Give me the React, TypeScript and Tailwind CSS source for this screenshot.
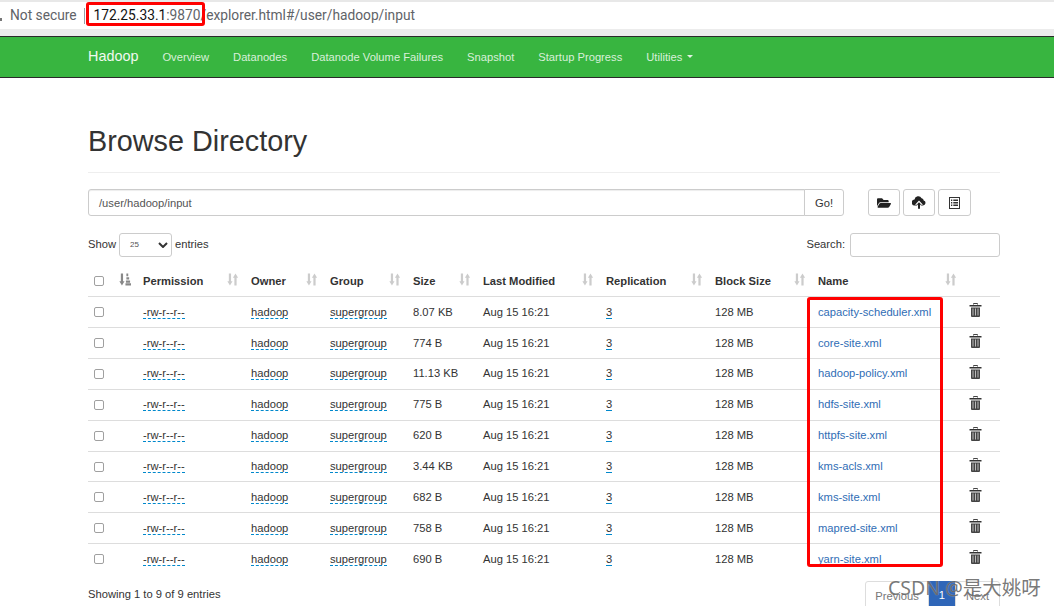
import { FaFolderOpen } from 'react-icons/fa'

const files = [
  { size: '8.07 KB', name: 'capacity-scheduler.xml' },
  { size: '774 B', name: 'core-site.xml' },
  { size: '11.13 KB', name: 'hadoop-policy.xml' },
  { size: '775 B', name: 'hdfs-site.xml' },
  { size: '620 B', name: 'httpfs-site.xml' },
  { size: '3.44 KB', name: 'kms-acls.xml' },
  { size: '682 B', name: 'kms-site.xml' },
  { size: '758 B', name: 'mapred-site.xml' },
  { size: '690 B', name: 'yarn-site.xml' },
]

const columns = [
  { label: 'Permission', width: 'w-[108px]' },
  { label: 'Owner', width: 'w-[79px]' },
  { label: 'Group', width: 'w-[83px]' },
  { label: 'Size', width: 'w-[70px]' },
  { label: 'Last Modified', width: 'w-[123px]' },
  { label: 'Replication', width: 'w-[109px]' },
  { label: 'Block Size', width: 'w-[103px]' },
  { label: 'Name', width: 'w-[151px]' },
]

function SortIcon({ active = false }: { active?: boolean }) {
  const color = active ? '#888' : '#ccc'
  return (
    <svg width="12" height="13" viewBox="0 0 13 13" fill={color}>
      <path d="M2 0h2.400v8.500H6L3.200 13 .4 8.500H2z" />
      {active ? (
        <path d="M8 0h2v3H8zM8 4h3v2.500H8zM7.500 7.500h4.500V10H7.500zM7 10.500h6V13H7z" />
      ) : (
        <path d="M8 13h2.400V4.500H12L9.200 0 6.400 4.500H8z" />
      )}
    </svg>
  )
}

function TrashIcon() {
  return (
    <svg width="13" height="14" viewBox="0 0 13 14">
      <path d="M4.500 1.500V.5h4v1" fill="none" stroke="#444" />
      <path d="M.5 2h12v1.500H.5z" fill="#333" />
      <path d="M2 4.500h9V13a1 1 0 0 1-1 1H3a1 1 0 0 1-1-1z" fill="#444" />
      <path d="M3.500 5.500h1v7h-1zM6 5.500h1v7H6zM8.500 5.500h1v7h-1z" fill="#bbb" />
    </svg>
  )
}

function CloudUpload() {
  return (
    <svg width="14" height="13" viewBox="0 0 14 13">
      <path d="M3 9.500a3 3 0 0 1-.5-6A3.800 3.800 0 0 1 9.600 2.300 2.500 2.500 0 0 1 11.700 4.600 2.500 2.500 0 0 1 11 9.500z" fill="#222" />
      <path d="M7 4.500l4 4.200H8.800V13H5.200V8.700H3z" fill="#fff" />
      <path d="M7 6.200l2.400 2.600H8v4H6v-4H4.600z" fill="#222" />
    </svg>
  )
}

function ListAlt() {
  return (
    <svg width="11" height="12" viewBox="0 0 11 12" fill="#333">
      <path d="M0 0h11v12H0zm1 1v10h9V1zm1 1.500h1.300V4H2zm2.300 0H9V4H4.300zM2 5h1.300v1.500H2zm2.300 0H9v1.500H4.300zM2 7.500h1.300V9H2zm2.300 0H9V9H4.300z" fillRule="evenodd" />
    </svg>
  )
}

function Checkbox() {
  return <span className="block h-[10px] w-[10px] rounded-[2px] border border-[#a0a0a0] bg-white" />
}

function Dotted({ children }: { children: string }) {
  return <span className="border-b border-dashed border-[#08c]">{children}</span>
}

export default function App() {
  return (
    <div className="relative h-[606px] w-[1054px] overflow-hidden bg-white font-['Liberation_Sans',sans-serif] text-[11.2px] text-[#333]">
      {/* browser address bar */}
      <div className="h-[36px] border-t-2 border-b-[7px] border-[#e8e8e8] border-b-[#ececec] bg-white">
        <div className="flex h-[27px] items-center pl-[10px] font-['Roboto',sans-serif] text-[13.75px] text-[#5f6368]">
          <span>Not secure</span>
          <span className="ml-[7px] mr-[9px] h-[16px] w-px bg-[#9aa0a6]" />
          <span className="text-[#111]">172.25.33.1</span>
          <span>:9870/explorer.html#/user/hadoop/input</span>
        </div>
      </div>

      {/* navbar */}
      <nav className="flex h-[42px] items-center border-y border-[#2a2a2a] bg-[#38b540] pl-[88px] text-[#d9f0da]">
        <span className="mr-[24px] text-[14.4px] text-[#f0f9f0]">Hadoop</span>
        <div className="flex gap-[24px]">
          <span>Overview</span>
          <span>Datanodes</span>
          <span>Datanode Volume Failures</span>
          <span>Snapshot</span>
          <span>Startup Progress</span>
          <span className="flex items-center gap-[5px]">
            Utilities
            <span className="h-0 w-0 border-x-[3px] border-t-[3px] border-x-transparent border-t-[#e2f3e3]" />
          </span>
        </div>
      </nav>

      <main className="ml-[88px] w-[912px]">
        <div className="mt-[44px] border-b border-[#eee] pb-[12px]">
          <h1 className="text-[28.8px] leading-[38px] text-[#333]">Browse Directory</h1>
        </div>

        {/* path and actions */}
        <div className="mt-[16px] flex items-center">
          <div className="flex h-[27px] w-[717px] items-center rounded-l-[3px] border border-[#ccc] pl-[10px] pt-px text-[#555] shadow-[inset_0_1px_1px_rgba(0,0,0,0.075)]">
            /user/hadoop/input
          </div>
          <button className="-ml-px h-[27px] w-[40px] rounded-r-[3px] border border-[#ccc] bg-white pt-px">Go!</button>
          <div className="ml-[24px] flex gap-[3px]">
            <button className="flex h-[27px] w-[32px] items-center justify-center rounded-[3px] border border-[#ccc]">
              <FaFolderOpen size={14} color="#222" />
            </button>
            <button className="flex h-[27px] w-[32px] items-center justify-center rounded-[3px] border border-[#ccc]">
              <CloudUpload />
            </button>
            <button className="flex h-[27px] w-[33px] items-center justify-center rounded-[3px] border border-[#ccc]">
              <ListAlt />
            </button>
          </div>
        </div>

        {/* length and search */}
        <div className="mt-[17px] flex h-[24px] items-center justify-between">
          <div className="flex items-center gap-[3px]">
            <span className="-mt-[2px]">Show</span>
            <div className="flex h-[24px] w-[53px] items-center justify-between rounded-[3px] border border-[#ccc] pl-[10px] pr-[3px] text-[8px] text-[#555]">
              25
              <svg width="10" height="6" viewBox="0 0 10 6" fill="none" stroke="#333" strokeWidth="2">
                <path d="M1 1l4 4 4-4" />
              </svg>
            </div>
            <span className="-mt-[2px]">entries</span>
          </div>
          <div className="flex items-center gap-[5px]">
            <span className="-mt-[2px]">Search:</span>
            <div className="h-[24px] w-[150px] rounded-[3px] border border-[#ccc]" />
          </div>
        </div>

        {/* listing */}
        <table className="mt-[9.7px] w-[912px] table-fixed border-collapse">
          <thead>
            <tr className="h-[30px] border-b border-[#ddd]">
              <th className="w-[47px] pl-[6px] text-left">
                <div className="flex items-center gap-[15px]">
                  <Checkbox />
                  <span className="mb-[4px]">
                    <SortIcon active />
                  </span>
                </div>
              </th>
              {columns.map((col) => (
                <th key={col.label} className={`${col.width} pl-[8px] text-left font-bold`}>
                  <div className="flex items-center justify-between pr-[4px]">
                    <span>{col.label}</span>
                    <span className="mb-[4px]">
                      <SortIcon />
                    </span>
                  </div>
                </th>
              ))}
              <th />
            </tr>
          </thead>
          <tbody>
            {files.map((file) => (
              <tr key={file.name} className="h-[30.875px] border-b border-[#ddd] last:border-b-0">
                <td className="pl-[6px]">
                  <Checkbox />
                </td>
                <td className="pl-[8px]"><Dotted>-rw-r--r--</Dotted></td>
                <td className="pl-[8px]"><Dotted>hadoop</Dotted></td>
                <td className="pl-[8px]"><Dotted>supergroup</Dotted></td>
                <td className="pl-[8px]">{file.size}</td>
                <td className="pl-[8px]">Aug 15 16:21</td>
                <td className="pl-[8px]"><Dotted>3</Dotted></td>
                <td className="pl-[8px]">128 MB</td>
                <td className="pl-[8px] text-[#2f6db5]">{file.name}</td>
                <td className="pl-[8px]">
                  <span className="-mt-[4px] block">
                    <TrashIcon />
                  </span>
                </td>
              </tr>
            ))}
          </tbody>
        </table>

        {/* footer */}
        <div className="mt-[6px] flex items-start justify-between">
          <span className="mt-[5px]">Showing 1 to 9 of 9 entries</span>
          <div className="flex h-[30px] text-[#777]">
            <span className="rounded-l-[3px] border border-[#ddd] px-[9px] pt-[6px]">Previous</span>
            <span className="bg-[#2f66b8] px-[10px] pt-[6px] text-white">1</span>
            <span className="rounded-r-[3px] border border-[#ddd] px-[10px] pt-[6px]">Next</span>
          </div>
        </div>
      </main>

      {/* annotation boxes */}
      <div className="absolute left-[86px] top-[2px] h-[24px] w-[119px] rounded-[3px] border-[3px] border-[#f00]" />
      <div className="absolute left-[807px] top-[297px] h-[270px] w-[136px] rounded-[3px] border-[3px] border-[#f00]" />

      {/* clipped security icon at the window edge */}
      <div className="absolute left-0 top-[18px] h-[3px] w-[2px] bg-[#777]" />

      {/* watermark */}
      <div className="absolute left-[888px] top-[575px] font-['Noto_Sans','Noto_Sans_CJK_SC',sans-serif] text-[19.5px] leading-[26px] text-[#555]/80 [text-shadow:0_0_1px_rgba(255,255,255,0.6)]">
        CSDN @是大姚呀
      </div>
    </div>
  )
}
